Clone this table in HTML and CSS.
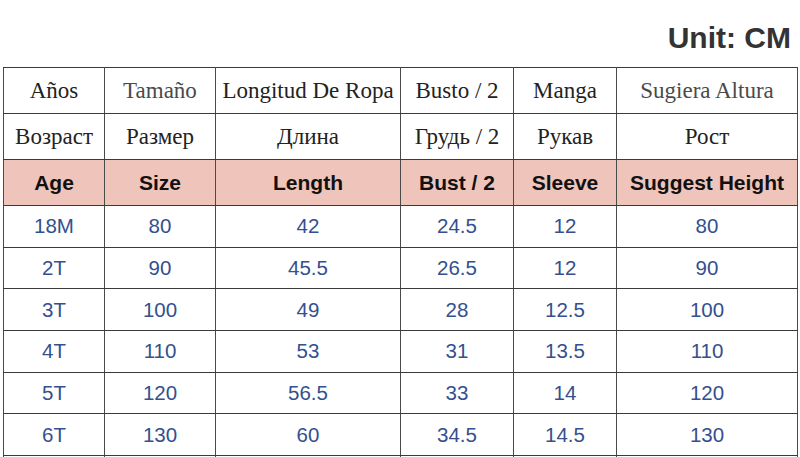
FILE: index.html
```html
<!DOCTYPE html>
<html lang="en">
<head>
<meta charset="utf-8">
<title>Size chart</title>
<link rel="stylesheet" href="styles.css">
</head>
<body>
<div class="unit-bar"><span class="unit">Unit: CM</span></div>
<table class="chart">
  <colgroup>
    <col class="c1"><col class="c2"><col class="c3"><col class="c4"><col class="c5"><col class="c6">
  </colgroup>
  <tbody>
    <tr class="row-lang">
      <td>Años</td><td class="soft">Tamaño</td><td>Longitud De Ropa</td><td>Busto / 2</td><td>Manga</td><td class="soft">Sugiera Altura</td>
    </tr>
    <tr class="row-lang">
      <td>Возраст</td><td>Размер</td><td>Длина</td><td>Грудь / 2</td><td>Рукав</td><td>Рост</td>
    </tr>
    <tr class="row-head">
      <td>Age</td><td>Size</td><td>Length</td><td>Bust / 2</td><td>Sleeve</td><td>Suggest Height</td>
    </tr>
    <tr class="row-data"><td>18M</td><td>80</td><td>42</td><td>24.5</td><td>12</td><td>80</td></tr>
    <tr class="row-data"><td>2T</td><td>90</td><td>45.5</td><td>26.5</td><td>12</td><td>90</td></tr>
    <tr class="row-data"><td>3T</td><td>100</td><td>49</td><td>28</td><td>12.5</td><td>100</td></tr>
    <tr class="row-data"><td>4T</td><td>110</td><td>53</td><td>31</td><td>13.5</td><td>110</td></tr>
    <tr class="row-data"><td>5T</td><td>120</td><td>56.5</td><td>33</td><td>14</td><td>120</td></tr>
    <tr class="row-data"><td>6T</td><td>130</td><td>60</td><td>34.5</td><td>14.5</td><td>130</td></tr>
    <tr class="row-data"><td></td><td></td><td></td><td></td><td></td><td></td></tr>
  </tbody>
</table>
</body>
</html>
```
FILE: styles.css
```css
html, body {
  margin: 0;
  padding: 0;
  background: #ffffff;
}

body {
  font-family: "Liberation Sans", Arial, sans-serif;
  overflow: hidden;
}

.unit-bar {
  height: 67px;
  box-sizing: border-box;
  padding: 23px 9px 0 0;
  display: flex;
  justify-content: flex-end;
}

.unit {
  font-size: 30px;
  line-height: 30px;
  font-weight: bold;
  color: #333333;
}

.chart {
  margin-left: 3px;
  width: 794px;
  table-layout: fixed;
  border-collapse: collapse;
}

.c1 { width: 101px; }
.c2 { width: 111px; }
.c3 { width: 185px; }
.c4 { width: 113px; }
.c5 { width: 103px; }
.c6 { width: 181px; }

.chart td {
  border: 1px solid #3a3a3a;
  border-left-color: #4a4a4a;
  border-right-color: #4a4a4a;
  text-align: center;
  vertical-align: middle;
  padding: 0;
  white-space: nowrap;
}

.row-lang td {
  height: 45px;
  font-family: "Liberation Serif", "Times New Roman", serif;
  font-size: 23px;
  color: #222222;
}

.row-lang td.soft {
  color: #4a4a4a;
}

.row-head td {
  height: 45px;
  background: #efc4ba;
  font-size: 21px;
  font-weight: bold;
  color: #111111;
}

.row-data td {
  height: 40.67px;
  font-size: 20.5px;
  color: #34508f;
}
```
